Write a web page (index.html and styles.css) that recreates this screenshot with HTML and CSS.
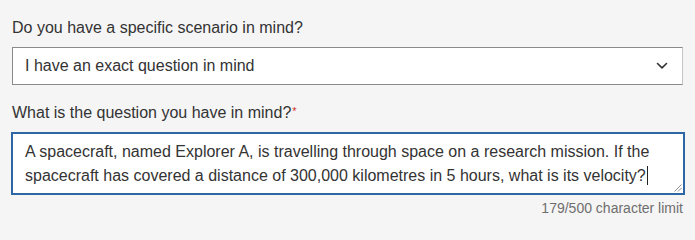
FILE: index.html
```html
<!DOCTYPE html>
<html lang="en">
<head>
<meta charset="utf-8">
<title>Question form</title>
<link rel="stylesheet" href="styles.css">
</head>
<body>
<form class="form">
  <div class="field">
    <label class="label" for="scenario">Do you have a specific scenario in mind?</label>
    <div class="select">
      <span class="select-value" id="scenario">I have an exact question in mind</span>
      <svg class="chevron" width="12" height="8" viewBox="0 0 12 8" aria-hidden="true"><polyline points="1.5,1.5 6,5.8 10.5,1.5" fill="none" stroke="#333" stroke-width="1.6" stroke-linecap="round" stroke-linejoin="round"/></svg>
    </div>
  </div>
  <div class="field field-question">
    <label class="label" for="question">What is the question you have in mind?<span class="req">*</span></label>
    <div class="textarea" id="question">
      <span>A spacecraft, named Explorer A, is travelling through space on a research mission. If the spacecraft has covered a distance of 300,000 kilometres in 5 hours, what is its velocity?</span><span class="caret"></span>
      <svg class="grip" width="9" height="9" viewBox="0 0 9 9" aria-hidden="true"><path d="M8.5 1.5 L1.5 8.5 M8.5 5 L5 8.5" stroke="#8c8c8c" stroke-width="1" fill="none"/></svg>
    </div>
    <div class="counter">179/500 character limit</div>
  </div>
</form>
</body>
</html>
```
FILE: styles.css
```css
html, body {
  margin: 0;
  padding: 0;
  background: #f5f5f5;
}
body {
  font-family: "Liberation Sans", Arial, sans-serif;
  color: #333333;
}
.form {
  padding: 16px 12px 0 12px;
  width: 671px;
}
.field {
  display: flex;
  flex-direction: column;
  gap: 7px;
}
.field-question {
  margin-top: 16px;
}
.label {
  font-size: 16px;
  line-height: 24px;
  color: #333;
}
.req {
  color: #d0312d;
  font-size: 11px;
  vertical-align: top;
  position: relative;
  top: -2px;
  margin-left: 1px;
}
.select {
  height: 36px;
  border: 1px solid #8a8a8a;
  background: #fff;
  display: flex;
  align-items: center;
  justify-content: space-between;
  padding: 0 14px 0 12px;
  font-size: 16px;
  border-right-color: #c4c4c4;
}
.chevron {
  display: block;
}
.textarea {
  position: relative;
  margin-left: -1px;
  margin-right: -2px;
  border: 2px solid #2f67a6;
  background: #fff;
  padding: 6px 20px 5px 12px;
  font-size: 16px;
  line-height: 24px;
  color: #333;
}
.caret {
  display: inline-block;
  width: 1px;
  height: 19px;
  background: #222;
  vertical-align: -4px;
  margin-left: 1px;
}
.grip {
  position: absolute;
  right: 1px;
  bottom: 1px;
}
.counter {
  margin-top: -3px;
  text-align: right;
  font-size: 14px;
  line-height: 18px;
  color: #6e6e6e;
}
```
